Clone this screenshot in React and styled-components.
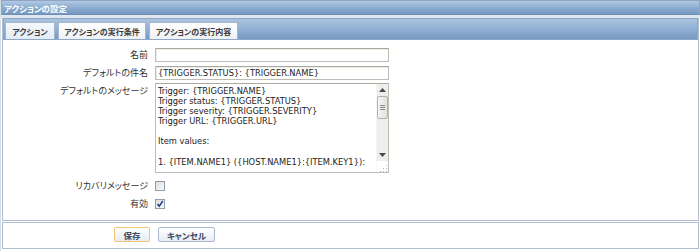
import React from "react";
import styled, { createGlobalStyle } from "styled-components";

const Global = createGlobalStyle`
  html, body { margin: 0; padding: 0; background: #ffffff; }
  body { font-family: "DejaVu Sans", Verdana, sans-serif; }
`;

const jp = `"Noto Sans CJK JP", "Noto Sans", sans-serif`;

const Frame = styled.div`
  width: 700px;
  height: 251px;
  display: flex;
  flex-direction: column;
  background: #ffffff;
  box-sizing: border-box;
  border-left: 1px solid #d6dee8;
`;

const TitleBar = styled.div`
  height: 15px;
  box-sizing: border-box;
  border: 1px solid #8ea6c3;
  border-bottom-color: #6f8fb5;
  background: linear-gradient(#b2c8e1, #8eaed2 50%, #7398c2);
  display: flex;
  align-items: center;
  padding-left: 2px;
  color: #ffffff;
  font-family: ${jp};
  font-feature-settings: "palt";
  font-weight: 700;
  font-size: 8.5px;
  line-height: 10px;
`;

const Gap = styled.div`
  height: 3px;
  background: #dfe6ef;
`;

const Window = styled.div`
  flex: 1;
  display: flex;
  flex-direction: column;
  margin: 0 1px;
  border: 1px solid #aebdd0;
  border-top: none;
  min-height: 0;
`;

const TabBar = styled.div`
  height: 22px;
  box-sizing: border-box;
  border: 1px solid #8da7c6;
  background: linear-gradient(#abc3de, #8fafd3 55%, #7599c3);
  display: flex;
  align-items: flex-end;
  gap: 3px;
  padding-left: 1px;
`;

const Tab = styled.div`
  width: ${(p) => p.$w}px;
  height: 17px;
  box-sizing: border-box;
  padding-top: 1px;
  display: flex;
  align-items: center;
  justify-content: center;
  border: 1px solid #a3b6cd;
  border-bottom: none;
  background: ${(p) =>
    p.$active
      ? "linear-gradient(#f6f9fc, #e3ebf4)"
      : "linear-gradient(#ffffff, #eef1f5)"};
  color: #3a3a3a;
  font-family: ${jp};
  font-feature-settings: "palt";
  font-weight: 700;
  font-size: 8px;
  line-height: 10px;
  white-space: nowrap;
`;

const Form = styled.div`
  flex: 1;
  display: grid;
  grid-template-columns: 145px 234px;
  column-gap: 7px;
  row-gap: 4px;
  align-content: start;
  padding-top: 8px;
`;

const Label = styled.div`
  font-family: ${jp};
  font-feature-settings: "palt";
  font-size: 9px;
  line-height: 10px;
  color: #333333;
  display: flex;
  justify-content: flex-end;
  align-items: ${(p) => (p.$top ? "flex-start" : "center")};
  padding-top: ${(p) => (p.$top ? "3px" : "0")};
  margin-top: ${(p) => p.$mt || 0}px;
  white-space: nowrap;
`;

const Input = styled.div`
  height: 14px;
  box-sizing: border-box;
  border: 1px solid #bdbdb4;
  border-top-color: #a9a9a0;
  background: #ffffff;
  box-shadow: inset 1px 1px 0 #ecece8;
  font-size: 8.3px;
  color: #222222;
  display: flex;
  align-items: center;
  padding-left: 2px;
  white-space: nowrap;
`;

const TextArea = styled.div`
  height: 90px;
  box-sizing: border-box;
  border: 1px solid #bdbdb4;
  border-top-color: #a9a9a0;
  background: #ffffff;
  display: flex;
  margin-top: -1px;
`;

const TextBody = styled.div`
  flex: 1;
  padding: 2px 2px 0 2px;
  overflow: hidden;
  font-size: 8.3px;
  line-height: 10.1px;
  color: #222222;
  white-space: pre;
`;

const ScrollCol = styled.div`
  width: 11px;
  display: flex;
  flex-direction: column;
  background: #f1f1ef;
  border-left: 1px solid #f6f6f4;
`;

const ScrollTrack = styled.div`
  height: 77px;
  display: flex;
  flex-direction: column;
  background: #eeeeec;
`;

const Arrow = styled.div`
  height: 12px;
  display: flex;
  align-items: center;
  justify-content: center;
`;

const Thumb = styled.div`
  height: 23px;
  box-sizing: border-box;
  border: 1px solid #b2b2ae;
  border-radius: 2px;
  background: linear-gradient(90deg, #f4f4f2, #e2e2de);
  display: flex;
  align-items: center;
  justify-content: center;
`;

const TrackFill = styled.div`
  flex: 1;
`;

const Grip = styled.div`
  flex: 1;
  display: flex;
  align-items: flex-end;
  justify-content: flex-end;
  background: #ffffff;
`;

const CheckBox = styled.div`
  width: 10px;
  height: 10px;
  box-sizing: border-box;
  border: 1px solid #8f9db0;
  background: linear-gradient(135deg, #dcdcd8, #fafafa);
  display: flex;
  align-items: center;
  justify-content: center;
  margin-top: ${(p) => p.$mt || 0}px;
`;

const Footer = styled.div`
  height: 27px;
  box-sizing: border-box;
  margin: 1px 1px 2px 1px;
  border: 1px solid #aebdd0;
  display: flex;
  align-items: flex-start;
  gap: 8px;
  padding: 4px 0 0 111px;
`;

const Button = styled.div`
  width: ${(p) => p.$w}px;
  height: 15px;
  box-sizing: border-box;
  border: 1px solid ${(p) => (p.$focus ? "#f5c675" : "#a9b8cc")};
  border-radius: 2px;
  background: linear-gradient(#ffffff, #e8edf4);
  display: flex;
  align-items: center;
  justify-content: center;
  font-family: ${jp};
  font-feature-settings: "palt";
  font-weight: 700;
  font-size: 8.5px;
  line-height: 10px;
  color: #3b4a66;
`;

const message = `Trigger: {TRIGGER.NAME}
Trigger status: {TRIGGER.STATUS}
Trigger severity: {TRIGGER.SEVERITY}
Trigger URL: {TRIGGER.URL}

Item values:

1. {ITEM.NAME1} ({HOST.NAME1}:{ITEM.KEY1}):`;

const UpArrow = () => (
  <svg width="7" height="4" viewBox="0 0 7 4">
    <path d="M0 4 L3.5 0 L7 4 Z" fill="#4a4a4a" />
  </svg>
);
const DownArrow = () => (
  <svg width="7" height="4" viewBox="0 0 7 4">
    <path d="M0 0 L3.5 4 L7 0 Z" fill="#4a4a4a" />
  </svg>
);
const GripLines = () => (
  <svg width="5" height="6" viewBox="0 0 5 6">
    <path d="M0 0.5H5M0 2.5H5M0 4.5H5" stroke="#8a8a86" strokeWidth="1" />
  </svg>
);
const ResizeDots = () => (
  <svg width="9" height="8" viewBox="0 0 9 8">
    <g fill="#b8b8b4">
      <rect x="7" y="1" width="1" height="1" />
      <rect x="4" y="4" width="1" height="1" />
      <rect x="7" y="4" width="1" height="1" />
      <rect x="1" y="7" width="1" height="1" />
      <rect x="4" y="7" width="1" height="1" />
      <rect x="7" y="7" width="1" height="1" />
    </g>
  </svg>
);
const Check = () => (
  <svg width="8" height="8" viewBox="0 0 8 8">
    <path d="M1.5 4 L3.2 6.2 L6.8 1" fill="none" stroke="#26418c" strokeWidth="1.5" />
  </svg>
);

export default function App() {
  return (
    <>
      <Global />
      <Frame>
        <TitleBar>アクションの設定</TitleBar>
        <Gap />
        <Window>
          <TabBar>
            <Tab $active $w={50}>アクション</Tab>
            <Tab $w={88}>アクションの実行条件</Tab>
            <Tab $w={89}>アクションの実行内容</Tab>
          </TabBar>
          <Form>
            <Label>名前</Label>
            <Input />
            <Label>デフォルトの件名</Label>
            <Input>{"{TRIGGER.STATUS}: {TRIGGER.NAME}"}</Input>
            <Label $top $mt={-1}>デフォルトのメッセージ</Label>
            <TextArea>
              <TextBody>{message}</TextBody>
              <ScrollCol>
                <ScrollTrack>
                  <Arrow><UpArrow /></Arrow>
                  <Thumb><GripLines /></Thumb>
                  <TrackFill />
                  <Arrow><DownArrow /></Arrow>
                </ScrollTrack>
                <Grip><ResizeDots /></Grip>
              </ScrollCol>
            </TextArea>
            <Label $mt={4}>リカバリメッセージ</Label>
            <CheckBox $mt={4} />
            <Label $mt={4}>有効</Label>
            <CheckBox $mt={4}><Check /></CheckBox>
          </Form>
        </Window>
        <Footer>
          <Button $focus $w={36}>保存</Button>
          <Button $w={57}>キャンセル</Button>
        </Footer>
      </Frame>
    </>
  );
}
